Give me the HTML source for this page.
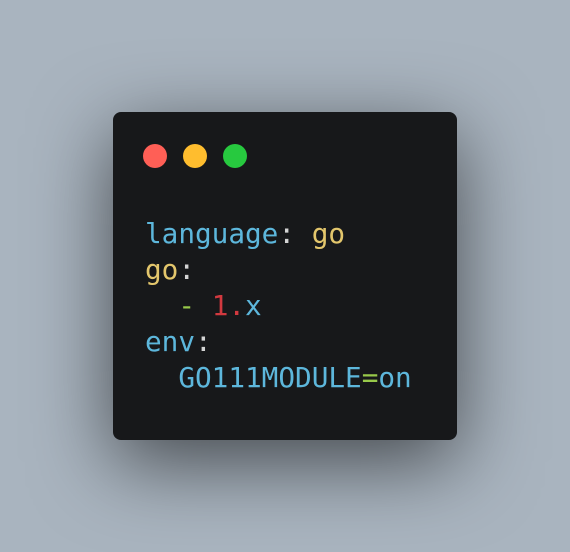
<!DOCTYPE html>
<html><head><style>
html,body{margin:0;padding:0}
body{width:570px;height:552px;background:#a9b4bf;position:relative;overflow:hidden}
.win{position:absolute;left:113px;top:112px;width:344px;height:328px;background:#17181a;border-radius:8px;box-shadow:0 22px 80px rgba(0,0,0,0.6)}
.d{position:absolute;top:32px;width:24px;height:24px;border-radius:50%}
pre{position:absolute;left:32px;top:104px;margin:0;font-family:"DejaVu Sans Mono","Liberation Mono",monospace;font-size:27.7px;line-height:36px;color:#5db7dc}
.y{color:#e3c66c}.c{color:#d4d4d4}.r{color:#d2393f}.g{color:#98c94a}
</style></head><body>
<div class="win">
<div class="d" style="left:30px;background:#ff5f56"></div>
<div class="d" style="left:70px;background:#ffbd2e"></div>
<div class="d" style="left:110px;background:#27c93f"></div>
<pre>language<span class="c">:</span> <span class="y">go</span>
<span class="y">go</span><span class="c">:</span>
  <span class="g">-</span> <span class="r">1.</span>x
env<span class="c">:</span>
  GO111MODULE<span class="g">=</span>on</pre>
</div>
</body></html>
